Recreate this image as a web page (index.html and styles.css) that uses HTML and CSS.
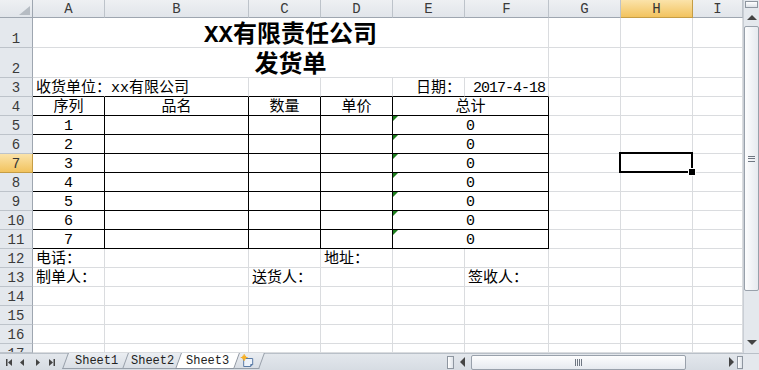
FILE: index.html
```html
<!DOCTYPE html>
<html lang="zh-CN">
<head>
  <meta charset="UTF-8">
  <title>发货单</title>
  <link rel="stylesheet" href="styles.css">
</head>
<body>
  <div class="app">
    <div class="main">
      <div class="sheet" id="sheet"></div>
      <div class="vscroll">
        <div class="split-v"></div>
        <div class="arrow up"></div>
        <div class="thumb-v"><span class="grip-v"></span></div>
        <div class="track"></div>
        <div class="arrow down"></div>
      </div>
    </div>
    <div class="bottom">
      <svg class="nav" width="63" height="17" viewBox="0 0 63 17">
        <rect x="6" y="5" width="1.5" height="7" fill="#444"/>
        <path d="M8 8.5 L12 5 L12 12 Z" fill="#444"/>
        <path d="M20 8.5 L24 5 L24 12 Z" fill="#444"/>
        <path d="M36 5 L40 8.5 L36 12 Z" fill="#444"/>
        <path d="M49 5 L53 8.5 L49 12 Z" fill="#444"/>
        <rect x="53.5" y="5" width="1.5" height="7" fill="#444"/>
      </svg>
      <div class="tabs">
        <div class="tab first"><span>Sheet1</span></div>
        <div class="tab"><span>Sheet2</span></div>
        <div class="tab active"><span>Sheet3</span></div>
        <div class="tab add">
          <span>
            <svg width="16" height="13" viewBox="0 0 16 13">
              <path d="M3.5 4.5 H12.5 V10.5 L10.5 12.5 H3.5 Z" fill="#eef3fa" stroke="#5a7ba6"/>
              <path d="M10.5 12.5 V10.5 H12.5" fill="none" stroke="#5a7ba6"/>
              <circle cx="4" cy="3.5" r="2.2" fill="#f6b12b"/>
              <path d="M4 0 V7 M0.5 3.5 H7.5" stroke="#f6b12b" stroke-width="1"/>
            </svg>
          </span>
        </div>
      </div>
      <div class="hscroll">
        <div class="split-h"></div>
        <div class="harrow left"></div>
        <div class="thumb-h"><span class="grip-h"></span></div>
        <div class="track"></div>
        <div class="harrow right"></div>
        <div class="split-h small"></div>
      </div>
      <div class="corner"></div>
    </div>
  </div>
  <script src="script.js"></script>
</body>
</html>
```

FILE: styles.css
```css
* {
  box-sizing: border-box;
}
body {
  margin: 0;
  background: #fff;
  font-family: "Liberation Mono", "Noto Sans CJK SC", monospace;
  color: #000;
}
.app {
  width: 759px;
  height: 370px;
  display: flex;
  flex-direction: column;
  overflow: hidden;
}
.main {
  display: flex;
  height: 353px;
}
.sheet {
  width: 743px;
  height: 353px;
  display: grid;
  grid-template-columns: 33px 72px 144px 72px 72px 72px 84px 72px 72px 50px;
  grid-template-rows: 18px 30px 30px repeat(14, 19px) 9px;
  overflow: hidden;
}

/* headers */
.hd, .rh, .corner-hd {
  background: linear-gradient(#eef0f3, #e1e5ea);
  color: #3a3a3a;
  font-size: 14px;
  display: flex;
  justify-content: center;
  overflow: hidden;
  border-right: 1px solid #bdc3ca;
  border-bottom: 1px solid #bdc3ca;
}
.hd {
  align-items: center;
  border-bottom-color: #9ea6b0;
  line-height: 16px;
}
.rh {
  align-items: flex-end;
  line-height: 15px;
  border-right-color: #9ea6b0;
  background: #e4e8ed;
}
.rh.cut {
  align-items: flex-start;
  padding-top: 3px;
}
.corner-hd {
  position: relative;
  border-right-color: #9ea6b0;
  border-bottom-color: #9ea6b0;
}
.corner-hd::after {
  content: '';
  position: absolute;
  right: 2px;
  bottom: 2px;
  border-left: 11px solid transparent;
  border-bottom: 9px solid #b6bcc3;
}
.hd.on, .rh.on {
  background: linear-gradient(#fbe3aa, #f2c35e);
  border-color: #c59d45;
  color: #333;
}

/* cells */
.c {
  position: relative;
  display: flex;
  align-items: flex-end;
  padding: 0 3px;
  font-size: 15px;
  line-height: 14px;
  white-space: nowrap;
  border-right: 1px solid #dadcdf;
  border-bottom: 1px solid #dadcdf;
}
.span2 {
  grid-column: span 2;
}
.span6 {
  grid-column: span 6;
}
.title {
  justify-content: center;
  font-size: 24px;
  font-weight: bold;
  line-height: 22px;
}
.center {
  justify-content: center;
}
.right {
  justify-content: flex-end;
}
.date {
  letter-spacing: -1px;
}
.spill {
  border-right-color: transparent;
  overflow: visible;
  z-index: 1;
}
.bb, .box {
  border-bottom-color: #000;
}
.box {
  border-right-color: #000;
}
.flag::before {
  content: '';
  position: absolute;
  left: 0;
  top: 0;
  border-top: 5px solid #1c7d1c;
  border-right: 5px solid transparent;
}
.sel::after {
  content: '';
  position: absolute;
  left: -2px;
  top: -2px;
  right: -1px;
  bottom: -1px;
  border: 2px solid #000;
  z-index: 2;
}
.sel::before {
  content: '';
  position: absolute;
  right: -4px;
  bottom: -4px;
  width: 6px;
  height: 6px;
  background: #000;
  border: 1px solid #fff;
  z-index: 3;
}

/* vertical scrollbar */
.vscroll {
  width: 16px;
  height: 353px;
  background: #e4e8ed;
  border-left: 1px solid #c9ced5;
  display: flex;
  flex-direction: column;
  align-items: center;
}
.split-v {
  width: 13px;
  height: 7px;
  margin-top: 1px;
  border: 1px solid #8e96a0;
  background: linear-gradient(#fff, #dde2e8);
}
.arrow {
  width: 0;
  height: 0;
  border-left: 5px solid transparent;
  border-right: 5px solid transparent;
}
.arrow.up {
  margin-top: 7px;
  border-bottom: 5px solid #444;
}
.arrow.down {
  margin-bottom: 8px;
  border-top: 5px solid #444;
}
.thumb-v {
  width: 15px;
  height: 265px;
  margin-top: 6px;
  border: 1px solid #99a1ab;
  border-radius: 2px;
  background: linear-gradient(to right, #fdfdfe, #e6eaef);
  display: flex;
  align-items: center;
  justify-content: center;
}
.grip-v {
  width: 7px;
  height: 6px;
  border-top: 1px solid #6f7782;
  border-bottom: 1px solid #6f7782;
  background: linear-gradient(#6f7782, #6f7782) center / 100% 1px no-repeat;
}
.track {
  flex: 1;
}

/* bottom bar */
.bottom {
  height: 17px;
  display: flex;
  background: linear-gradient(#e3e7ec, #d6dce3);
  border-top: 1px solid #b9c0c8;
}
.nav {
  flex: none;
}
.tabs {
  display: flex;
  height: 16px;
  margin-top: -1px;
}
.tab {
  height: 16px;
  transform: skewX(-20deg);
  border: 1px solid #98a0aa;
  border-top: none;
  background: linear-gradient(#ebeef2, #d9dee5);
  margin-left: -3px;
  display: flex;
  align-items: center;
  justify-content: center;
  font-size: 12px;
  color: #222;
}
.tab span {
  transform: skewX(20deg);
  display: flex;
}
.tab.first {
  width: 63px;
  margin-left: 2px;
}
.tab:nth-child(2) {
  width: 56px;
}
.tab.active {
  width: 59px;
  background: #fff;
  border-color: #8d95a0;
  z-index: 1;
}
.tab.add {
  width: 28px;
}
.hscroll {
  margin-left: auto;
  width: 296px;
  display: flex;
  align-items: center;
}
.split-h {
  width: 7px;
  height: 13px;
  border: 1px solid #8e96a0;
  background: linear-gradient(to right, #fff, #dde2e8);
}
.split-h.small {
  width: 6px;
  margin-left: 3px;
}
.harrow {
  width: 0;
  height: 0;
  border-top: 5px solid transparent;
  border-bottom: 5px solid transparent;
}
.harrow.left {
  margin-left: 6px;
  border-right: 5px solid #444;
}
.harrow.right {
  border-left: 5px solid #444;
}
.thumb-h {
  width: 215px;
  height: 15px;
  margin-left: 6px;
  border: 1px solid #99a1ab;
  border-radius: 2px;
  background: linear-gradient(#fdfdfe, #e6eaef);
  display: flex;
  align-items: center;
  justify-content: center;
}
.grip-h {
  width: 7px;
  height: 7px;
  background: repeating-linear-gradient(to right, #6f7782 0 1px, transparent 1px 2px);
}
.corner {
  width: 16px;
  background: #e4e8ed;
}
```

FILE: script.js
```javascript
var COLS = ['A', 'B', 'C', 'D', 'E', 'F', 'G', 'H', 'I'];
var ROW_COUNT = 17;

var cells = {
  A1: { text: 'XX有限责任公司', span: 6, cls: 'title' },
  A2: { text: '发货单', span: 6, cls: 'title' },
  A3: { text: '收货单位：xx有限公司', cls: 'bb spill' },
  B3: { cls: 'bb' },
  C3: { cls: 'bb' },
  D3: { cls: 'bb' },
  E3: { text: '日期：', cls: 'bb right' },
  F3: { text: '2017-4-18', cls: 'bb right date' },
  A12: { text: '电话：' },
  D12: { text: '地址：' },
  A13: { text: '制单人：' },
  C13: { text: '送货人：' },
  F13: { text: '签收人：' },
  H7: { cls: 'sel' }
};

['序列', '品名', '数量', '单价', '总计'].forEach(function (h, i) {
  cells[COLS[i] + '4'] = { text: h, cls: 'box center', span: i === 4 ? 2 : 1 };
});

for (var n = 1; n <= 7; n++) {
  var r = n + 4;
  cells['A' + r] = { text: String(n), cls: 'box center' };
  cells['B' + r] = { cls: 'box' };
  cells['C' + r] = { cls: 'box' };
  cells['D' + r] = { cls: 'box' };
  cells['E' + r] = { text: '0', cls: 'box center flag', span: 2 };
}

function el(cls, text) {
  var d = document.createElement('div');
  d.className = cls;
  if (text) d.textContent = text;
  return d;
}

function buildSheet() {
  var sheet = document.getElementById('sheet');
  sheet.appendChild(el('corner-hd'));
  COLS.forEach(function (c) {
    sheet.appendChild(el('hd' + (c === 'H' ? ' on' : ''), c));
  });

  for (var row = 1; row <= ROW_COUNT; row++) {
    var rh = 'rh';
    if (row === 7) rh += ' on';
    if (row === ROW_COUNT) rh += ' cut';
    sheet.appendChild(el(rh, String(row)));
    var i = 0;
    while (i < COLS.length) {
      var cell = cells[COLS[i] + row] || {};
      var span = cell.span || 1;
      var cls = 'c';
      if (cell.cls) cls += ' ' + cell.cls;
      if (span > 1) cls += ' span' + span;
      sheet.appendChild(el(cls, cell.text));
      i += span;
    }
  }
}

buildSheet();
```
